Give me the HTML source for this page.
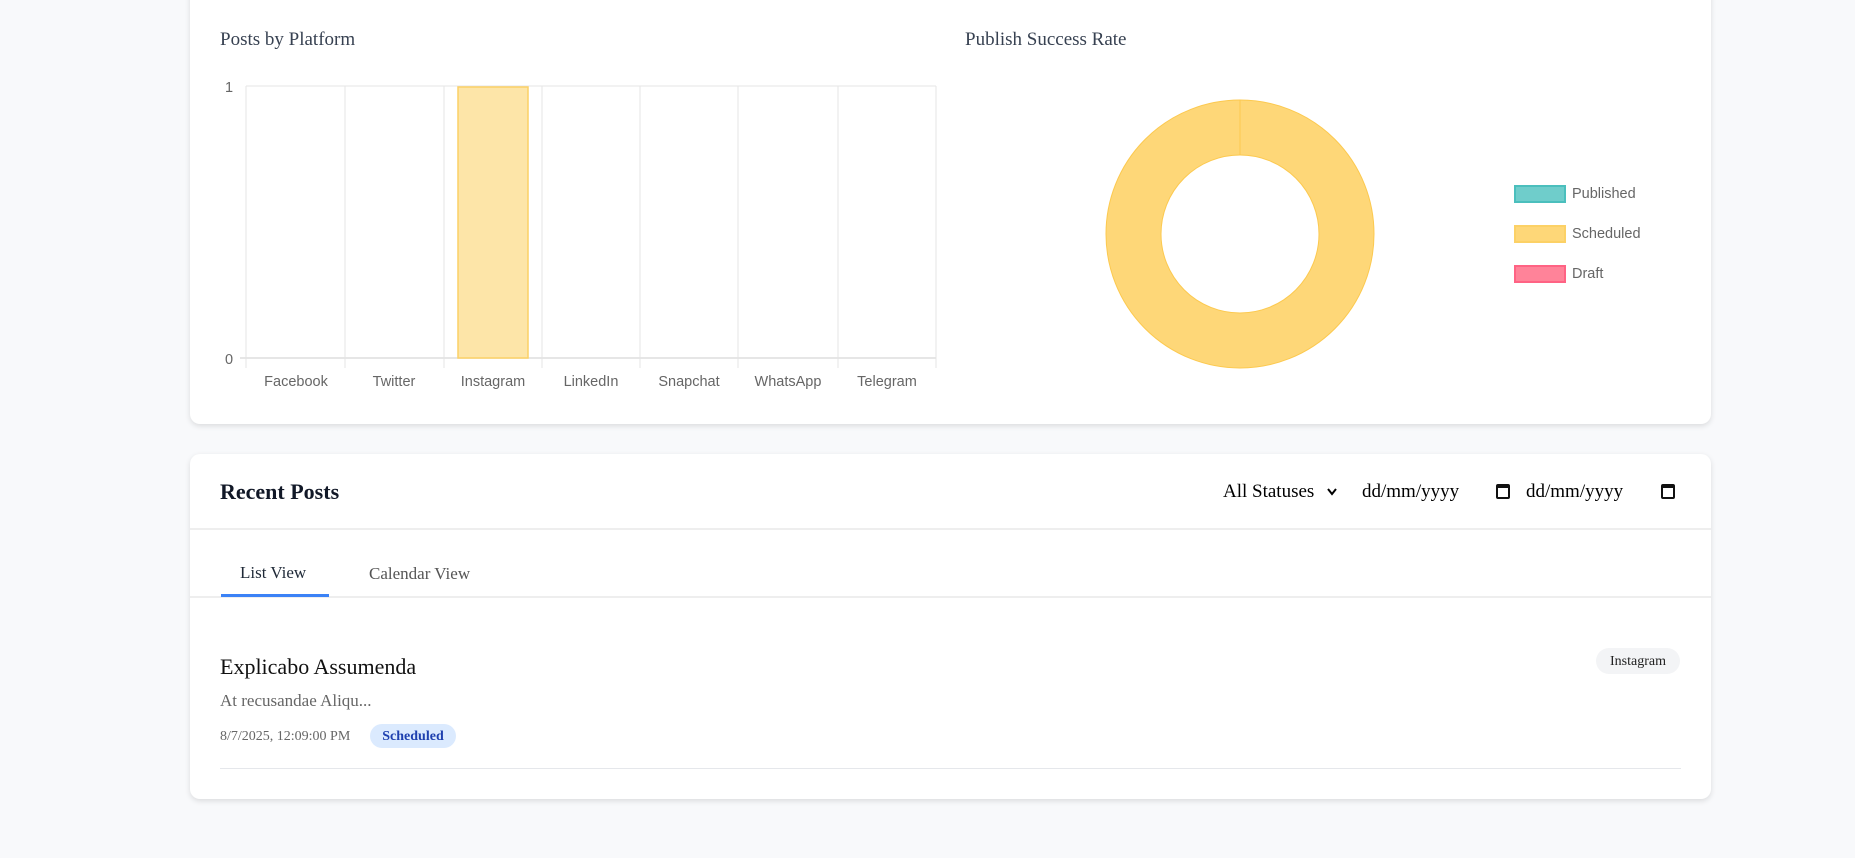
<!DOCTYPE html>
<html><head><meta charset="utf-8"><style>
*{box-sizing:border-box;margin:0;padding:0}
body{width:1855px;height:858px;background:#f8f9fb;position:relative;overflow:hidden;font-family:"Liberation Serif",serif;color:#1f2937}
.card{position:absolute;background:#fff;border-radius:10px;box-shadow:0 2px 6px rgba(0,0,0,.12)}
.abs{position:absolute;white-space:nowrap}
</style></head><body>
<div class="card" style="left:190px;top:-20px;width:1521px;height:444px"></div>
<div class="abs" style="left:220px;top:29px;font-size:19px;color:#374151">Posts by Platform</div>
<div class="abs" style="left:965px;top:29px;font-size:19px;color:#374151">Publish Success Rate</div>
<svg class="abs" style="left:0;top:0" width="1855" height="430">
<g stroke="#e5e5e5" stroke-width="1">
<line x1="246" y1="86" x2="936" y2="86"/>
<line x1="240" y1="358" x2="936" y2="358" stroke="#ddd" stroke-width="1.5"/>
<line x1="246" y1="86" x2="246" y2="368"/>
<line x1="345" y1="86" x2="345" y2="368"/>
<line x1="444" y1="86" x2="444" y2="368"/>
<line x1="542" y1="86" x2="542" y2="368"/>
<line x1="640" y1="86" x2="640" y2="368"/>
<line x1="738" y1="86" x2="738" y2="368"/>
<line x1="838" y1="86" x2="838" y2="368"/>
<line x1="936" y1="86" x2="936" y2="368"/>
</g>
<rect x="458" y="87" width="70" height="271" fill="#fde5a8" stroke="#fcd166" stroke-width="1.5"/>
<g font-family="Liberation Sans" font-size="14.5" fill="#666" text-anchor="middle">
<text x="229" y="92">1</text><text x="229" y="364">0</text>
<text x="296" y="386">Facebook</text><text x="394" y="386">Twitter</text><text x="493" y="386">Instagram</text>
<text x="591" y="386">LinkedIn</text><text x="689" y="386">Snapchat</text><text x="788" y="386">WhatsApp</text><text x="887" y="386">Telegram</text>
</g>
<circle cx="1240" cy="234" r="106.5" fill="none" stroke="#fed778" stroke-width="55"/>
<circle cx="1240" cy="234" r="134" fill="none" stroke="#fcc94f" stroke-width="1"/>
<circle cx="1240" cy="234" r="79" fill="none" stroke="#fcc94f" stroke-width="1"/>
<line x1="1240" y1="100" x2="1240" y2="155" stroke="#fcc94f"/>
<rect x="1515" y="186" width="50" height="16" fill="#6fcdcb" stroke="#4bbfbd" stroke-width="2"/>
<rect x="1515" y="226" width="50" height="16" fill="#fed778" stroke="#fcd166" stroke-width="2"/>
<rect x="1515" y="266" width="50" height="16" fill="#ff8399" stroke="#ff6384" stroke-width="2"/>
<g font-family="Liberation Sans" font-size="14.5" fill="#666">
<text x="1572" y="198">Published</text><text x="1572" y="238">Scheduled</text><text x="1572" y="278">Draft</text>
</g>
</svg>
<div class="card" style="left:190px;top:454px;width:1521px;height:345px"></div>
<div class="abs" style="left:220px;top:479px;font-size:22px;font-weight:bold;color:#111827">Recent Posts</div>
<div class="abs" style="left:1223px;top:481px;font-size:19px;color:#000">All Statuses</div>
<svg class="abs" style="left:1326px;top:487px" width="12" height="10"><path d="M2 2 L6 7 L10 2" fill="none" stroke="#000" stroke-width="2"/></svg>
<div class="abs" style="left:1362px;top:481px;font-size:19px;color:#000">dd/mm/yyyy</div>
<div class="abs" style="left:1496px;top:484px;width:14px;height:15px;border:2px solid #111;border-top-width:4px;border-radius:2px"></div>
<div class="abs" style="left:1526px;top:481px;font-size:19px;color:#000">dd/mm/yyyy</div>
<div class="abs" style="left:1661px;top:484px;width:14px;height:15px;border:2px solid #111;border-top-width:4px;border-radius:2px"></div>
<div class="abs" style="left:190px;top:528px;width:1521px;height:2px;background:#eee"></div>
<div class="abs" style="left:240px;top:563px;font-size:17px;color:#1f2937">List View</div>
<div class="abs" style="left:369px;top:564px;font-size:17px;color:#555">Calendar View</div>
<div class="abs" style="left:190px;top:596px;width:1521px;height:2px;background:#eee"></div>
<div class="abs" style="left:221px;top:594px;width:108px;height:3px;background:#3b82f6"></div>
<div class="abs" style="left:220px;top:654px;font-size:22px;color:#111">Explicabo Assumenda</div>
<div class="abs" style="left:220px;top:691px;font-size:17px;color:#666">At recusandae Aliqu...</div>
<div class="abs" style="left:220px;top:729px;font-size:14px;color:#666">8/7/2025, 12:09:00 PM</div>
<div class="abs" style="left:370px;top:724px;width:86px;height:24px;border-radius:12px;background:#dbeafe;color:#1e40af;font-size:14px;font-weight:bold;text-align:center;line-height:25px">Scheduled</div>
<div class="abs" style="left:1596px;top:648px;width:84px;height:26px;border-radius:13px;background:#f3f4f6;color:#222;font-size:14px;text-align:center;line-height:27px">Instagram</div>
<div class="abs" style="left:220px;top:768px;width:1461px;height:1px;background:#e5e7eb"></div>
</body></html>
